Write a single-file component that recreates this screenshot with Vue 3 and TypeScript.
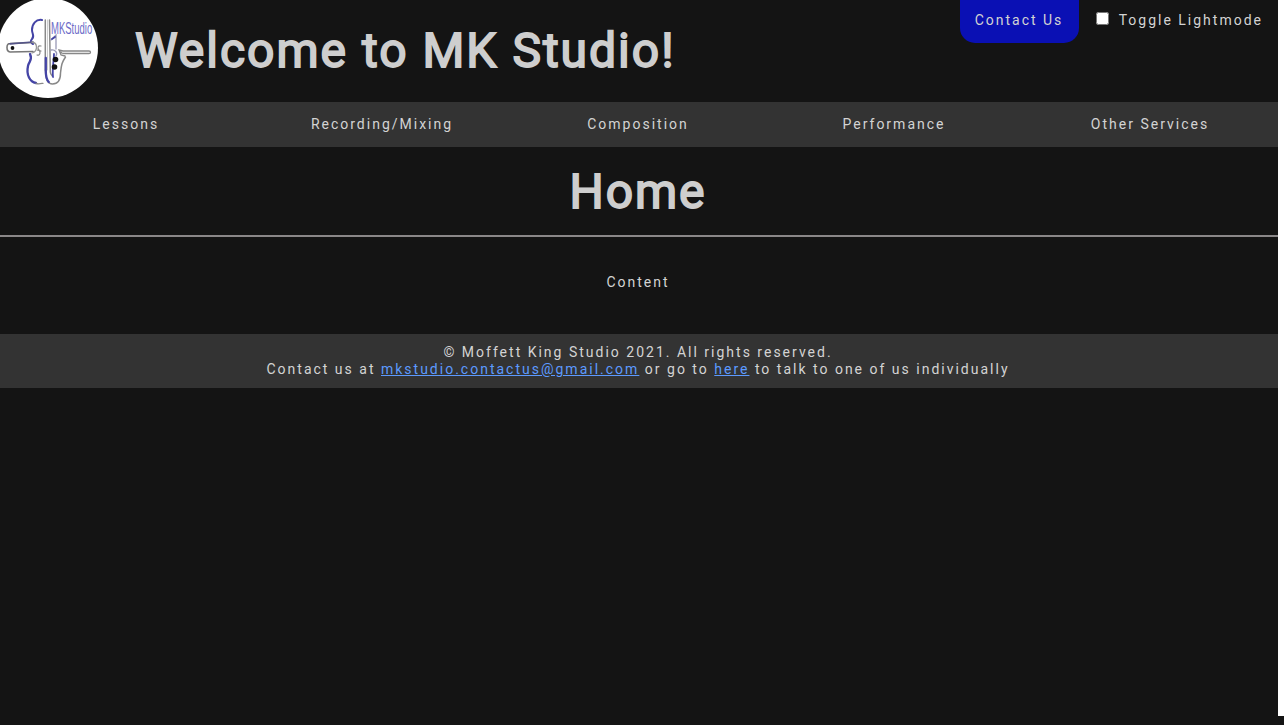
<script setup lang="ts">
import { ref } from 'vue'

const lightMode = ref<boolean>(false)
const links: string[] = ['Lessons', 'Recording/Mixing', 'Composition', 'Performance', 'Other Services']
</script>

<template>
  <div class="page">
    <header class="header">
      <svg class="logo" viewBox="0 0 98 98" fill="none" stroke-linecap="round">
        <circle cx="48" cy="48" r="50" fill="#fff" />
        <g stroke="#4444a6" stroke-width="2">
          <path d="M42 20C36 19 32 24 32 30c0 4 3 6 0 9-2 2-1 4 1 5" />
          <path d="M30 54c3 6-1 7-2 12-2 9 2 16 8 17" stroke-width="2.3" />
        </g>
        <path d="M36 83.300c2 1 4 .5 7 0" stroke="#888" stroke-width="1.300" />
        <path d="M45.300 20v50M49.500 20l.8 52c0 2 1 3 2 4" stroke="#888" stroke-width="1.500" />
        <path d="M47.500 20v50" stroke="#ccc" stroke-width="1" />
        <path d="M45.500 70c0 9 2 14 7 14 6 0 8-5 8-11 1-8 1-10 5-16" stroke="#888" stroke-width="1.500" />
        <path d="M45.800 58v13c0 6 1 9 3 11" stroke="#4444a6" stroke-width="2.300" />
        <path d="M33 42.500L10 43.500c-4 0-4 8 0 8.500l23-.5" stroke="#777" stroke-width="1.600" />
        <path d="M10 43.800l23-1.800" stroke="#555588" stroke-width="1.700" />
        <path d="M32 42c6 1 6 9 0 11" stroke="#999" stroke-width="1.300" />
        <circle cx="12.500" cy="48" r="1.900" fill="#111" />
        <path d="M41 46c-3-1-4 2-2 4s1 6-2 5M37 50l4 1" stroke="#888" stroke-width="1.200" />
        <path d="M61 52c0 1 2 1.500 4 1.500h24c2 0 2-2.500 0-2.500H63l-4-1 2 5 4 1" stroke="#888" stroke-width="1.300" />
        <path d="M51 40l5-5v14M51 50c4-1 7 3 5 6" stroke="#9999b5" stroke-width="1.300" />
        <path d="M52 39l3-2M54 54c0 6-2 14-1 23" stroke="#4444a6" stroke-width="1.800" />
        <circle cx="55.500" cy="59.500" r="2.800" fill="#111" />
        <circle cx="54.500" cy="67" r="2.800" fill="#111" />
        <text class="logo-text" transform="translate(51 34) scale(0.56 1)">MKStudio</text>
      </svg>
      <h1 class="title">Welcome to MK Studio!</h1>
      <div class="actions">
        <a class="contact">Contact Us</a>
        <label class="toggle">
          <input v-model="lightMode" class="check" type="checkbox" />
          <span>Toggle Lightmode</span>
        </label>
      </div>
    </header>
    <nav class="nav">
      <a v-for="link in links" :key="link" class="nav-link">{{ link }}</a>
    </nav>
    <main>
      <h1 class="heading">Home</h1>
      <p class="content">Content</p>
    </main>
    <footer class="footer">
      <div>© Moffett King Studio 2021. All rights reserved.</div>
      <div>
        Contact us at <a class="link">mkstudio.contactus@gmail.com</a> or go to
        <a class="link">here</a> to talk to one of us individually
      </div>
    </footer>
  </div>
</template>

<style>
html {
  background: #141414;
}
body {
  overflow: hidden;
}
</style>

<style scoped>
.page {
  box-sizing: border-box;
  height: 716px;
  border-right: 6px solid #fff;
  background: #141414;
  color: #d3d3d3;
  font: 14px/17px Roboto, sans-serif;
  letter-spacing: 2px;
}
.header {
  display: flex;
  align-items: flex-start;
  height: 102px;
}
.logo {
  flex: none;
  width: 98px;
  height: 98px;
}
.logo-text {
  font: 17px "Liberation Sans", sans-serif;
  letter-spacing: 0;
  fill: #6c6cc8;
}
.title,
.heading {
  margin: 0;
  color: #cecece;
  font-size: 48px;
  font-weight: 400;
  -webkit-text-stroke: 1.8px #cecece;
  line-height: 60px;
  letter-spacing: 2px;
}
.title {
  margin: 21px 0 0 37px;
  white-space: nowrap;
}
.actions {
  display: flex;
  align-items: flex-start;
  margin-left: auto;
  margin-right: 15px;
}
.contact {
  box-sizing: border-box;
  width: 119px;
  height: 42.5px;
  padding: 12px 0 0 15px;
  border-radius: 0 0 15px 15px;
  background: #0a10b4;
  white-space: nowrap;
}
.toggle {
  display: flex;
  margin: 12px 0 0 17px;
  white-space: nowrap;
}
.check {
  width: 13px;
  height: 13px;
  margin: 0 10px 0 0;
}
.nav {
  display: grid;
  grid-template-columns: repeat(5, 256px);
  height: 45px;
  background: #333;
}
.nav-link {
  padding-top: 14px;
  padding-right: 4px;
  text-align: center;
}
.heading {
  height: 88px;
  padding-top: 15px;
  padding-right: 2px;
  box-sizing: border-box;
  text-align: center;
}
.content {
  box-sizing: border-box;
  height: 99px;
  margin: 0;
  padding-top: 37px;
  padding-right: 2px;
  border-top: 2px solid #8a8788;
  text-align: center;
}
.footer {
  box-sizing: border-box;
  height: 54px;
  padding-top: 10px;
  padding-right: 2px;
  background: #333;
  text-align: center;
}
.link {
  color: #5c9aff;
  text-decoration: underline;
}
</style>
